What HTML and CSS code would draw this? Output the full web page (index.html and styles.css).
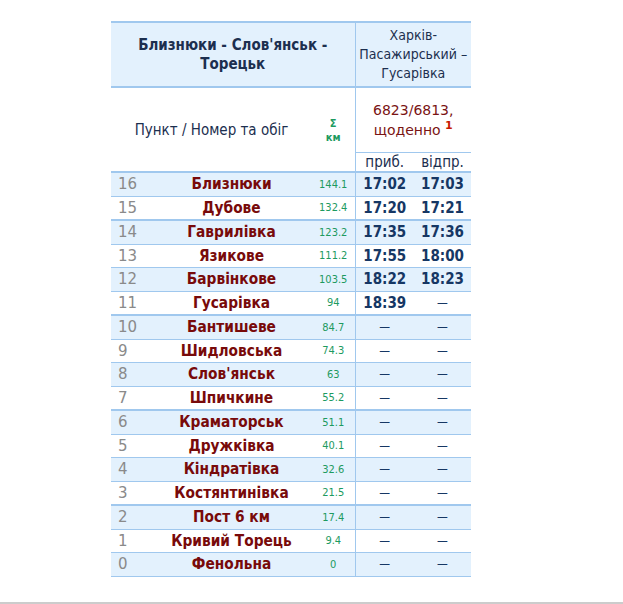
FILE: index.html
```html
<!DOCTYPE html>
<html lang="uk">
<head>
<meta charset="utf-8">
<title>Близнюки - Слов'янськ - Торецьк</title>
<link rel="stylesheet" href="styles.css">
</head>
<body>
<main class="page">
  <table class="sched">
    <colgroup>
      <col class="c-num"><col class="c-name"><col class="c-km"><col class="c-arr"><col class="c-dep">
    </colgroup>
    <thead>
      <tr class="h1">
        <th colspan="3" class="route">Близнюки - Слов'янськ -<br>Торецьк</th>
        <th colspan="2" class="train-route sep">Харків-<br>Пасажирський –<br>Гусарівка</th>
      </tr>
      <tr class="h2">
        <td colspan="2" rowspan="2" class="point">Пункт / Номер та обіг</td>
        <td rowspan="2" class="sigma">Σ<br>км</td>
        <td colspan="2" class="train sep">6823/6813,<br>щоденно <sup>1</sup></td>
      </tr>
      <tr class="h3">
        <td class="sub sep">приб.</td>
        <td class="sub">відпр.</td>
      </tr>
    </thead>
    <tbody>
      <tr class="alt"><td class="n">16</td><td class="st">Близнюки</td><td class="km">144.1</td><td class="t sep">17:02</td><td class="t">17:03</td></tr>
      <tr class="grp"><td class="n">15</td><td class="st">Дубове</td><td class="km">132.4</td><td class="t sep">17:20</td><td class="t">17:21</td></tr>
      <tr class="alt"><td class="n">14</td><td class="st">Гаврилівка</td><td class="km">123.2</td><td class="t sep">17:35</td><td class="t">17:36</td></tr>
      <tr><td class="n">13</td><td class="st">Язикове</td><td class="km">111.2</td><td class="t sep">17:55</td><td class="t">18:00</td></tr>
      <tr class="alt"><td class="n">12</td><td class="st">Барвінкове</td><td class="km">103.5</td><td class="t sep">18:22</td><td class="t">18:23</td></tr>
      <tr class="grp"><td class="n">11</td><td class="st">Гусарівка</td><td class="km">94</td><td class="t sep">18:39</td><td class="d">—</td></tr>
      <tr class="alt"><td class="n">10</td><td class="st">Бантишеве</td><td class="km">84.7</td><td class="d sep">—</td><td class="d">—</td></tr>
      <tr><td class="n">9</td><td class="st">Шидловська</td><td class="km">74.3</td><td class="d sep">—</td><td class="d">—</td></tr>
      <tr class="alt"><td class="n">8</td><td class="st">Слов'янськ</td><td class="km">63</td><td class="d sep">—</td><td class="d">—</td></tr>
      <tr class="grp"><td class="n">7</td><td class="st">Шпичкине</td><td class="km">55.2</td><td class="d sep">—</td><td class="d">—</td></tr>
      <tr class="alt"><td class="n">6</td><td class="st">Краматорськ</td><td class="km">51.1</td><td class="d sep">—</td><td class="d">—</td></tr>
      <tr><td class="n">5</td><td class="st">Дружківка</td><td class="km">40.1</td><td class="d sep">—</td><td class="d">—</td></tr>
      <tr class="alt"><td class="n">4</td><td class="st">Кіндратівка</td><td class="km">32.6</td><td class="d sep">—</td><td class="d">—</td></tr>
      <tr class="grp"><td class="n">3</td><td class="st">Костянтинівка</td><td class="km">21.5</td><td class="d sep">—</td><td class="d">—</td></tr>
      <tr class="alt"><td class="n">2</td><td class="st">Пост 6 км</td><td class="km">17.4</td><td class="d sep">—</td><td class="d">—</td></tr>
      <tr><td class="n">1</td><td class="st">Кривий Торець</td><td class="km">9.4</td><td class="d sep">—</td><td class="d">—</td></tr>
      <tr class="alt"><td class="n">0</td><td class="st">Фенольна</td><td class="km">0</td><td class="d sep">—</td><td class="d">—</td></tr>
    </tbody>
  </table>
</main>
<footer class="foot"></footer>
</body>
</html>
```

FILE: styles.css
```css
html, body {
  margin: 0;
  padding: 0;
  background: #ffffff;
}
body {
  font-family: "DejaVu Sans Condensed", "DejaVu Sans", sans-serif;
  width: 623px;
  height: 604px;
  overflow: hidden;
}
.page {
  padding: 21px 0 0 111px;
  height: 581px;
  box-sizing: content-box;
}
.foot {
  border-top: 2px solid #cccccc;
}
.sched {
  border-collapse: collapse;
  width: 360px;
  table-layout: fixed;
  border-top: 2px solid #a0c8ee;
}
.c-num { width: 40px; }
.c-name { width: 161px; }
.c-km { width: 43px; }
.c-arr { width: 59px; }
.c-dep { width: 57px; }

.sched th, .sched td {
  padding: 0;
  text-align: center;
  vertical-align: middle;
}
.sep { border-left: 1px solid #a0c8ee; }

.h1 th {
  background: #e3f1fd;
  height: 63px;
  border-bottom: 2px solid #a0c8ee;
}
.route {
  font-weight: bold;
  font-size: 15px;
  line-height: 19px;
  color: #1c2f4f;
}
.train-route {
  font-weight: normal;
  font-size: 14px;
  line-height: 19px;
  color: #1c2f4f;
}
.point {
  font-size: 15px;
  color: #1c2f4f;
  border-bottom: 2px solid #a0c8ee;
}
.sched td.sigma {
  padding-top: 3px;
  font-size: 11px;
  line-height: 14px;
  font-weight: bold;
  color: #1d9a5f;
  border-bottom: 2px solid #a0c8ee;
}
.train {
  height: 64px;
  font-family: "DejaVu Sans", sans-serif;
  font-size: 14px;
  line-height: 20px;
  color: #7a1414;
  border-bottom: 1px solid #a0c8ee;
}
.train sup {
  color: #c81a00;
  font-weight: bold;
  font-size: 11px;
  line-height: 0;
  vertical-align: 6px;
}
.sub {
  height: 18px;
  font-size: 15px;
  color: #1c2f4f;
  border-bottom: 2px solid #a0c8ee;
}

tbody tr td {
  height: 22.5px;
  border-bottom: 1px solid #a0c8ee;
}
tbody tr.grp td { border-bottom-width: 2px; }
tbody tr.alt td { background: #e3f1fd; }

.sched td.n {
  text-align: left;
  padding-left: 7px;
  font-family: "DejaVu Sans", sans-serif;
  font-size: 15px;
  color: #8a8a8a;
}
.st {
  font-size: 15.3px;
  font-weight: bold;
  color: #780a0a;
}
.km {
  font-size: 11px;
  color: #1d9a5f;
}
.t {
  font-size: 15px;
  font-weight: bold;
  color: #163764;
}
.d {
  font-size: 12px;
  color: #163764;
}
```
